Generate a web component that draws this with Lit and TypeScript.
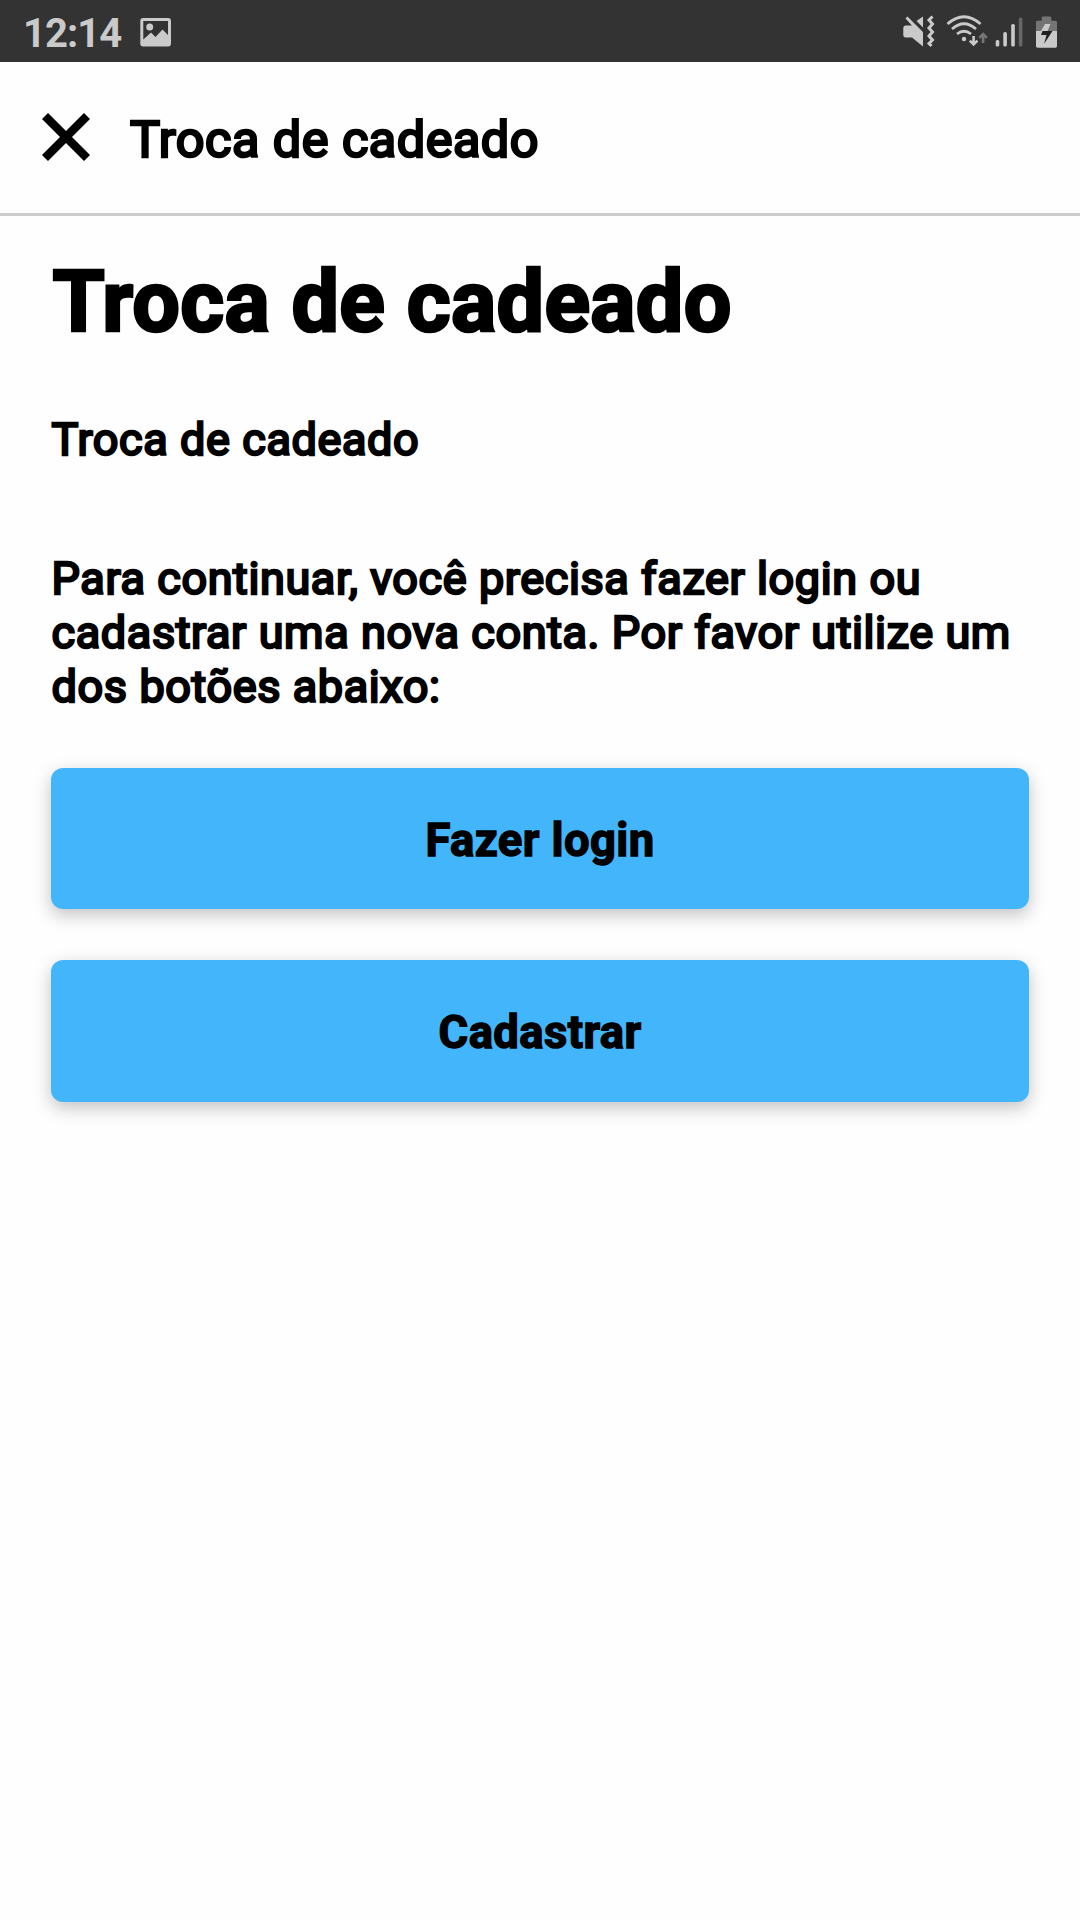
import { LitElement, html, css } from "lit";
import { customElement, property } from "lit/decorators.js";

@customElement("status-bar")
class StatusBar extends LitElement {
  static styles = css`
    :host { display: block; }
    .bar {
      display: flex; align-items: center; justify-content: space-between;
      box-sizing: border-box; height: 62px; background: #333;
      padding-left: 23px; color: #cacaca;
    }
    .left { display: flex; align-items: center; }
    .time { width: 100px; font-size: 40px; line-height: 62px; font-weight: 700; letter-spacing: -0.95px; padding-top: 5px; }
    svg { display: block; }
    .photo { margin-left: 17px; }
  `;
  render() {
    return html`
      <div class="bar">
        <div class="left">
          <span class="time">12:14</span>
          <svg class="photo" width="32" height="62" viewBox="0 0 32 62" fill="#cacaca">
            <path fill-rule="evenodd" d="M3 18H28Q31 18 31 21V43.500Q31 46.500 28 46.500H3Q.3 46.500 .3 43.500V21Q.3 18 3 18ZM3.300 21V39.500L11 32.500L15.500 37L22.500 29.500L28 35V21Z"/>
            <circle cx="9.700" cy="27" r="3.500"/>
          </svg>
        </div>
        <svg width="190" height="62" viewBox="0 0 190 62" fill="#cacaca">
          <path d="M15.500 18.500L17.500 16.500L33 32V46.500L22 37.500H15.500Q13.300 37.500 13.300 35V28Q13.300 25.500 15.500 25.500H22Z"/>
          <path d="M33 16.500V27.500L26.500 21Z"/>
          <path d="M42.500 16.500L39 20L42.500 24L39 28L42.500 32L39 36L42.500 40L39 43.500L41.500 46" fill="none" stroke="#cacaca" stroke-width="3"/>
          <g fill="none" stroke="#cacaca" stroke-width="2.800">
            <path d="M57.500 24Q74 9.500 90.500 24"/>
            <path d="M62 29Q74 18.500 86 29"/>
            <path d="M67 34Q74 28.500 81 34"/>
            <path d="M83.600 36V44.500M79.800 40.700L83.600 44.500L87.400 40.700" stroke-width="2.600"/>
            <path d="M93.100 43V34.500M89.300 37.800L93.100 34L96.900 37.800" stroke="#777" stroke-width="2.600"/>
          </g>
          <circle cx="74" cy="39" r="2.200"/>
          <rect x="105.700" y="40" width="3.600" height="6.500" rx="1.500"/>
          <rect x="113.300" y="32" width="3.600" height="14.500" rx="1.500"/>
          <rect x="121.200" y="24" width="3.600" height="22.500" rx="1.500"/>
          <rect x="128.800" y="17.500" width="3.600" height="29" rx="1.500" fill="#666"/>
          <path d="M146 31V22Q146 20.700 147.500 20.700H151.700V17.500Q151.700 16.500 153 16.500H160Q161.300 16.500 161.300 17.500V20.700H165.500Q167 20.700 167 22V31Z" fill="#747474"/>
          <path d="M146 31H167V46Q167 47.700 165.500 47.700H147.500Q146 47.700 146 46Z"/>
          <path d="M155 24H160.500L157.500 31H151Z"/>
          <path d="M152.500 31H162.500L154 44L156.500 35H151Z" fill="#222"/>
        </svg>
      </div>
    `;
  }
}

@customElement("action-button")
class ActionButton extends LitElement {
  @property() label = "";
  static styles = css`
    :host { display: block; }
    .button {
      display: flex; align-items: center; justify-content: center;
      width: 100%; height: 100%; padding: 4px 0 0; border: 0; border-radius: 12px;
      background: #43b6fb; color: #000;
      font: 700 45.4px Roboto, sans-serif; letter-spacing: 0.4px;
      -webkit-text-stroke: 1.4px #000;
      box-shadow: 0 6px 18px rgba(0, 0, 0, 0.24);
    }
  `;
  render() {
    return html`<button class="button">${this.label}</button>`;
  }
}

@customElement("app-root")
class AppRoot extends LitElement {
  static styles = css`
    :host {
      display: block; height: 1920px; background: #fefefe; color: #000;
      font-family: Roboto, sans-serif; overflow: hidden;
    }
    .header {
      display: flex; align-items: center; box-sizing: border-box; height: 154px;
      padding-left: 42px; border-bottom: 3px solid #ccc;
    }
    .close { display: block; width: 48px; height: 48px; margin-bottom: 2px; }
    .title {
      margin-left: 40px; padding-top: 5px; font-size: 50.4px; line-height: 60px;
      font-weight: 400; letter-spacing: 0.5px; -webkit-text-stroke: 2.6px #000;
    }
    .content { padding: 36.6px 51px 0; }
    .heading {
      margin: 0; padding-left: 1.4px; font-size: 84.4px; line-height: 100px;
      font-weight: 700; letter-spacing: 0.37px; -webkit-text-stroke: 2.7px #000;
    }
    .text {
      margin: 0; padding-left: 0.6px; font-size: 45px; line-height: 54px;
      font-weight: 400; letter-spacing: 0.6px; -webkit-text-stroke: 2.4px #000;
    }
    .sub { margin-top: 60px; }
    .message { margin-top: 85px; white-space: nowrap; }
    .actions { display: grid; grid-template-rows: 141px 141.700px; gap: 51px; margin-top: 54.400px; }
  `;
  render() {
    return html`
      <status-bar></status-bar>
      <header class="header">
        <svg class="close" viewBox="0 0 48 48"><path d="M3 3L45 45M45 3L3 45" stroke="#000" stroke-width="8.500"/></svg>
        <span class="title">Troca de cadeado</span>
      </header>
      <main class="content">
        <h1 class="heading">Troca de cadeado</h1>
        <p class="text sub">Troca de cadeado</p>
        <p class="text message">
          Para continuar, você precisa fazer login ou<br />cadastrar uma nova conta. Por favor utilize um<br />dos botões abaixo:
        </p>
        <div class="actions">
          <action-button label="Fazer login"></action-button>
          <action-button label="Cadastrar"></action-button>
        </div>
      </main>
    `;
  }
}
